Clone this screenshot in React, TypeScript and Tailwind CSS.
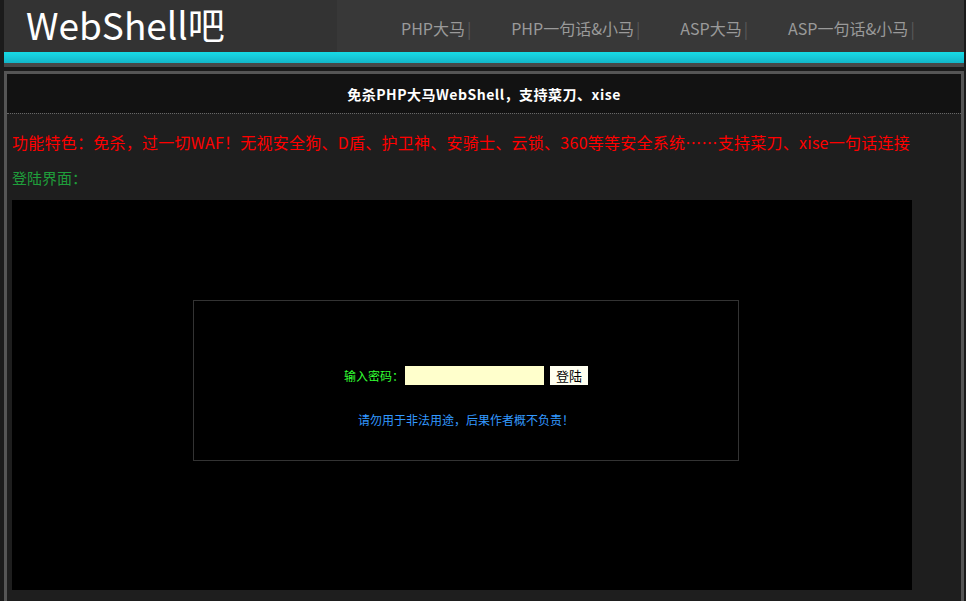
import React from "react";

const cjk = { fontFamily: '"Noto Sans CJK SC", "Noto Sans", sans-serif' };

export default function App() {
  const nav = ["PHP大马", "PHP一句话&小马", "ASP大马", "ASP一句话&小马"];
  return (
    <div className="min-h-[601px] w-[966px] bg-[#1b1b1b]" style={cjk}>
      <div className="ml-[4px] w-[960px]">
        {/* header */}
        <div className="flex h-[52px]">
          <div className="flex w-[333px] shrink-0 items-start bg-[#333333] pl-[22px]">
            <span className="whitespace-nowrap text-[37px] leading-[48px] text-white">WebShell吧</span>
          </div>
          <div className="flex flex-1 items-center bg-[#383838] pl-[64px] pt-[4px]">
            {nav.map((n) => (
              <div key={n} className="mr-[40px] flex shrink-0 items-center whitespace-nowrap text-[16px] text-[#9a9a9a]">
                <span>{n}</span>
                <span className="ml-[2px] text-[#5a5a5a]">|</span>
              </div>
            ))}
          </div>
        </div>
        <div className="h-[11px] bg-gradient-to-b from-[#16dbe6] via-[#17c8d8] to-[#12b6c8]" />
        <div className="h-[4px] bg-[#474747]" />
        <div className="h-[4px]" />
        {/* content box */}
        <div className="border-[3px] border-[#555555] bg-[#1e1e1e] pb-[30px]">
          <div className="flex h-[39px] items-center justify-center bg-[#121212] pt-[2px] text-[14px] font-bold tracking-[0.5px] text-white">
            免杀PHP大马WebShell，支持菜刀、xise
          </div>
          <div className="border-t border-dotted border-[#666666]" />
          <div className="px-[5px] pt-[16px]">
            <div className="whitespace-nowrap text-[16px] leading-[24px] tracking-[0.25px] text-[#ff0000]">
              功能特色：免杀，过一切WAF！无视安全狗、D盾、护卫神、安骑士、云锁、360等等安全系统……支持菜刀、xise一句话连接
            </div>
            <div className="mt-[12px] text-[15px] leading-[24px] text-[#1f9e3b]">登陆界面：</div>
            <div className="mt-[10px] h-[390px] w-[900px] bg-black pt-[100px]">
              <div className="ml-[181px] flex h-[161px] w-[546px] flex-col items-center border border-[#333333] pt-[65px]">
                <div className="flex items-center">
                  <span className="text-[12px] text-[#33ff33]">输入密码：</span>
                  <div className="ml-[1px] h-[19px] w-[139px] bg-[#ffffcc]" />
                  <div className="ml-[6px] flex h-[19px] w-[38px] items-center justify-center bg-[#fffff0] text-[13px] text-black">
                    登陆
                  </div>
                </div>
                <div className="mt-[26px] text-[12px] text-[#3399ff]">请勿用于非法用途，后果作者概不负责！</div>
              </div>
            </div>
          </div>
        </div>
      </div>
    </div>
  );
}
